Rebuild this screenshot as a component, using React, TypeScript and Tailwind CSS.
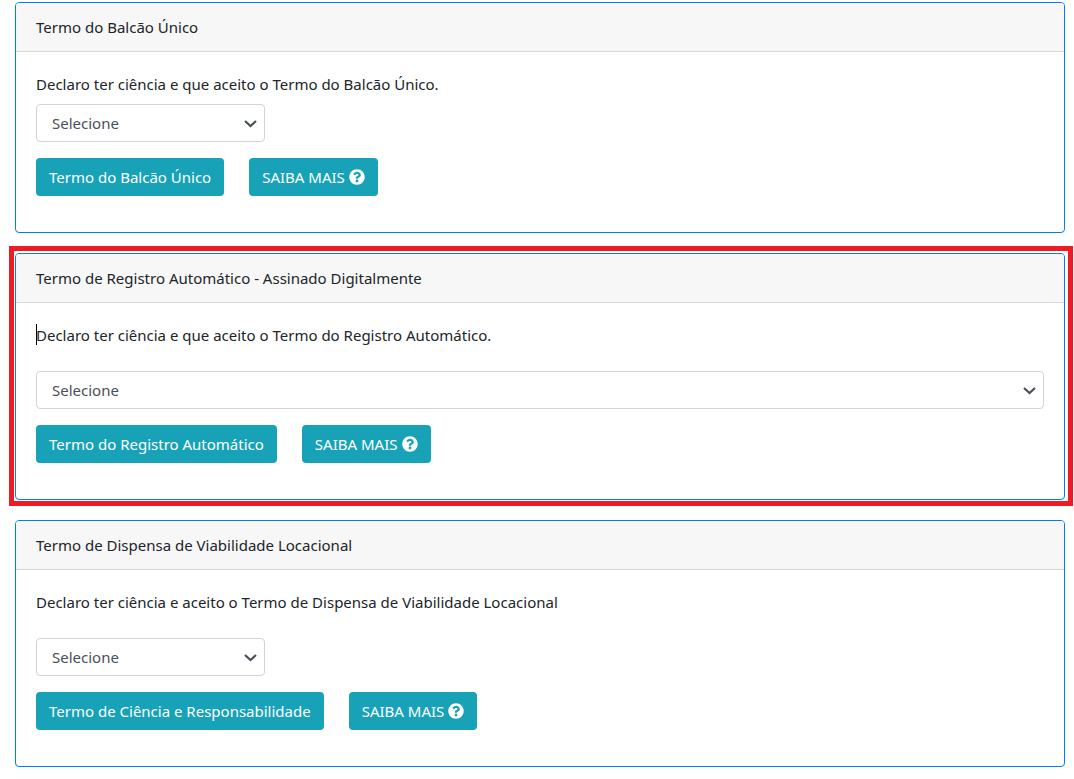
import { FaQuestionCircle } from 'react-icons/fa'

type Term = {
  id: string
  title: string
  statement: string
  button: string
  labelGap: string
  selectWidth: string
  highlighted?: boolean
}

const terms: Term[] = [
  {
    id: 'balcao-unico',
    title: 'Termo do Balcão Único',
    statement: 'Declaro ter ciência e que aceito o Termo do Balcão Único.',
    button: 'Termo do Balcão Único',
    labelGap: 'mb-2',
    selectWidth: 'w-[229px]',
  },
  {
    id: 'registro-automatico',
    title: 'Termo de Registro Automático - Assinado Digitalmente',
    statement: 'Declaro ter ciência e que aceito o Termo do Registro Automático.',
    button: 'Termo do Registro Automático',
    labelGap: 'mb-6',
    selectWidth: 'w-full',
    highlighted: true,
  },
  {
    id: 'dispensa-viabilidade',
    title: 'Termo de Dispensa de Viabilidade Locacional',
    statement: 'Declaro ter ciência e aceito o Termo de Dispensa de Viabilidade Locacional',
    button: 'Termo de Ciência e Responsabilidade',
    labelGap: 'mb-6',
    selectWidth: 'w-[229px]',
  },
]

const buttonClass =
  'flex h-[38px] items-center gap-1 whitespace-nowrap rounded bg-[#17a2b8] px-[13px] text-white hover:bg-[#138496]'

function TermCard({ term }: { term: Term }) {
  return (
    <section className="relative">
      <div className="overflow-hidden rounded border border-[#007bff] bg-white">
        <h2 className="border-b border-[#d8d8d8] bg-[#f7f7f7] px-5 py-3">{term.title}</h2>
        <div className="px-5 pt-5 pb-9">
          <label htmlFor={term.id} className={`relative block ${term.labelGap}`}>
            {term.highlighted && <span className="absolute top-px left-0 h-[21px] w-px bg-black" />}
            {term.statement}
          </label>
          <div className={`relative max-w-full ${term.selectWidth}`}>
            <select
              id={term.id}
              className="block h-[38px] w-full appearance-none rounded border border-[#ced4da] bg-white px-[15px] text-[#495057]"
            >
              <option>Selecione</option>
              <option>Sim</option>
              <option>Não</option>
            </select>
            <svg
              className="pointer-events-none absolute top-4 right-2 h-2 w-[13px]"
              viewBox="0 0 13 8"
              fill="none"
              stroke="#495057"
              strokeWidth="2.2"
              aria-hidden="true"
            >
              <path d="M1 1l5.5 5L12 1" />
            </svg>
          </div>
          <div className="mt-4 flex flex-wrap gap-[25px]">
            <button type="button" className={buttonClass}>{term.button}</button>
            <button type="button" className={buttonClass}>
              SAIBA MAIS
              <FaQuestionCircle size={16} />
            </button>
          </div>
        </div>
      </div>
      {term.highlighted && (
        <div className="pointer-events-none absolute -top-[7px] -right-2 -bottom-1.5 -left-1.5 border-5 border-[#ed1c24]" />
      )}
    </section>
  )
}

export default function App() {
  return (
    <main className="flex flex-col gap-5 bg-white pt-0.5 pr-[9px] pb-3 pl-[15px] font-['Noto_Sans','Open_Sans',sans-serif] text-[15px] leading-6 text-[#212529]">
      {terms.map(term => (
        <TermCard key={term.id} term={term} />
      ))}
    </main>
  )
}
